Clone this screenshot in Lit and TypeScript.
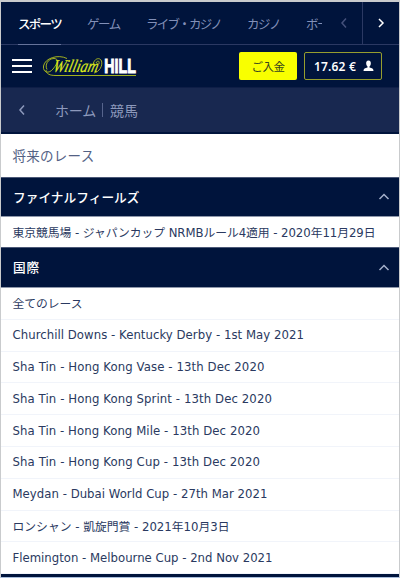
import { LitElement, html, css } from "lit";
import { customElement, property } from "lit/decorators.js";

/** A line of text whose tracking is adjusted so that it spans a given width. */
@customElement("fit-text")
class FitText extends LitElement {
  @property() text = "";
  @property({ type: Number }) span = 0;

  static styles = css`
    :host { display: block; white-space: pre; }
    .t { display: inline-block; }
    .cjk { font-size: var(--cjk-size, 1em); }
  `;

  updated() {
    const el = this.renderRoot.querySelector(".t") as HTMLElement;
    el.style.letterSpacing = "0px";
    const natural = el.getBoundingClientRect().width;
    el.style.letterSpacing = `${(this.span - natural) / this.text.length}px`;
  }

  render() {
    const runs = this.text.split(/([\u3000-\u9fff]+)/).filter((r) => r);
    return html`<span class="t">${runs.map((r) =>
      /[\u3000-\u9fff]/.test(r) ? html`<span class="cjk">${r}</span>` : r)}</span>`;
  }
}

const chevron = (d: string) => html`<svg class="chev" width="14" height="14" viewBox="0 0 14 14"
  fill="none" stroke="currentColor" stroke-width="1.5"><path d=${d}></path></svg>`;
const LEFT = "M9 2.5L5 7L9 11.5";
const RIGHT = "M5 3L9 7L5 11";
const UP = "M2.5 10L7 5.5L11.5 10";

const races: [string, number][] = [
  ["全てのレース", 70],
  ["Churchill Downs - Kentucky Derby - 1st May 2021", 291.5],
  ["Sha Tin - Hong Kong Vase - 13th Dec 2020", 252],
  ["Sha Tin - Hong Kong Sprint - 13th Dec 2020", 259.5],
  ["Sha Tin - Hong Kong Mile - 13th Dec 2020", 247.5],
  ["Sha Tin - Hong Kong Cup - 13th Dec 2020", 247.5],
  ["Meydan - Dubai World Cup - 27th Mar 2021", 255],
  ["ロンシャン - 凱旋門賞 - 2021年10月3日", 217],
  ["Flemington - Melbourne Cup - 2nd Nov 2021", 260],
];

@customElement("app-root")
class AppRoot extends LitElement {
  static styles = css`
    :host {
      display: flex; flex-direction: column; box-sizing: border-box;
      width: 400px; height: 578px; overflow: hidden;
      border: 1px solid #c9cbcd; border-top-width: 2px; border-bottom: 1px solid #a9bddb;
      background: #fff; color: #2a3960;
      font-family: "DejaVu Sans Condensed", "DejaVu Sans", "Noto Sans CJK JP", sans-serif;
      font-stretch: condensed; font-size: 13px;
    }
    * { box-sizing: border-box; }
    svg { display: block; flex: none; }
    .tabs { height: 43px; flex: none; display: flex; background: #00143c; color: #8290b8;
      border-bottom: 1px solid #2b3963; font-size: 12.5px; }
    .list { flex: 1; display: flex; gap: 26px; padding-left: 17px; min-width: 0; }
    .tab { height: 43px; line-height: 46px; flex: none; }
    .active { color: #fff; font-weight: 500; border-bottom: 1px solid #66739b; }
    .clip { width: 16px; overflow: hidden; }
    .prev { width: 37px; display: flex; align-items: center; justify-content: center; color: #44517b; }
    .next { width: 37px; display: flex; align-items: center; justify-content: center;
      border-left: 1px solid #2b3963; color: #fff; }
    .head { height: 42px; flex: none; display: flex; align-items: center; background: #00143c; padding: 0 17px 0 11px; }
    .logo { margin-left: 10px; margin-top: 1px; overflow: visible; }
    .script { font-family: "Liberation Serif", serif; font-style: italic; font-size: 18px; }
    .hill { font-family: "Liberation Sans", sans-serif; font-weight: 700; font-size: 20px; }
    .pay { margin-left: auto; width: 58px; height: 28px; border-radius: 2px; background: #f9ff00;
      display: flex; align-items: center; justify-content: center; color: #35431e; font-size: 11.5px; }
    .acct { margin-left: 7px; width: 78px; height: 28px; border: 1px solid #979e2e; border-radius: 2px;
      display: flex; align-items: center; gap: 7px; padding-left: 9px; color: #fff;
      font-family: "Noto Sans", sans-serif; font-stretch: normal; font-weight: 600; font-size: 12px; }
    .crumb { height: 47px; flex: none; display: flex; align-items: center; background: #182850;
      border-top: 1px solid #0e1e47; border-bottom: 2px solid #00143c; color: #8d99bc; padding-left: 14px; font-size: 14px; }
    .home { margin-left: 26px; }
    .bar { width: 1px; height: 14px; background: #56648c; margin: 0 7px 0 6px; }
    .title { height: 43px; flex: none; display: flex; align-items: center; padding: 0 0 1px 11.5px; color: #536184; font-size: 13.5px; }
    .sect { flex: none; display: flex; align-items: center; justify-content: space-between;
      padding: 0 8px 2px 12px; background: #00143c; color: #fff; font-weight: 500; font-size: 12.7px;
      border-top: 1px solid #4b5877; border-bottom: 1px solid #8f98ab; }
    .s1 { height: 40px; }
    .s2 { height: 41px; }
    .chev { color: #a3afca; }
    .prev .chev, .next .chev, .crumb .chev { color: inherit; }
    .row { flex: none; height: 31.8px; display: flex; align-items: center; padding: 0 0 1px 11.5px;
      border-bottom: 1px solid #f1f4fa; --cjk-size: 11.8px; }
    .one { height: 30px; border: 0; }
    .foot { flex: 1; background: #00143c; }
  `;

  row(text: string, span: number, cls = "") {
    return html`<div class="row ${cls}"><fit-text text=${text} span=${span}></fit-text></div>`;
  }

  render() {
    return html`
      <nav class="tabs">
        <div class="list">
          <div class="tab active"><fit-text text="スポーツ" span="43"></fit-text></div>
          <div class="tab"><fit-text text="ゲーム" span="33"></fit-text></div>
          <div class="tab"><fit-text text="ライブ・カジノ" span="75"></fit-text></div>
          <div class="tab"><fit-text text="カジノ" span="33"></fit-text></div>
          <div class="tab clip"><fit-text text="ボー" span="22"></fit-text></div>
        </div>
        <div class="prev">${chevron(LEFT)}</div>
        <div class="next">${chevron(RIGHT)}</div>
      </nav>
      <header class="head">
        <svg width="20" height="16" viewBox="0 0 20 16" fill="#fff">
          <rect y="1" width="20" height="2"></rect><rect y="7" width="20" height="2"></rect><rect y="13" width="20" height="2"></rect>
        </svg>
        <svg class="logo" width="96" height="24" viewBox="0 0 96 24" fill="none">
          <g stroke="#b4c31c" stroke-width=".9">
            <path d="M25 3.5C16 -1 3 3 1.5 11C.8 18 7 19 11 14C15 9 18 4 12 3.5C6 3.5 2.5 10 5 14.5"></path>
            <path d="M4 15C4 19 8 20.5 14 20.5H94"></path>
            <path d="M51 10C52 3 58 2 59.5 6C61 11 57 17 52 18M54 8C56 4.5 57.5 6 57 9"></path>
          </g>
          <text class="script" x="9" y="17.3" textLength="45" lengthAdjust="spacingAndGlyphs" transform="translate(5.6 0) skewX(-14)" fill="#dce71b" stroke="#dce71b" stroke-width=".2">William</text>
          <text class="hill" x="62.3" y="17.6" textLength="31.5" lengthAdjust="spacingAndGlyphs" fill="#fff" stroke="#fff" stroke-width="1.1">HILL</text>
        </svg>
        <div class="pay"><fit-text text="ご入金" span="33"></fit-text></div>
        <div class="acct"><fit-text text="17.62 €" span="42"></fit-text>
          <svg width="11" height="12" viewBox="0 0 11 12" fill="#fff"><path d="M5.5 0.5C7.4.5 8 2 7.8 3.8C7.7 5.2 7 6 6.5 6.5V7.5C9 8 10.5 8.6 10.5 11H.5C.5 8.6 2 8 4.5 7.5V6.5C4 6 3.3 5.2 3.2 3.8C3 2 3.6.5 5.5.5Z"></path></svg>
        </div>
      </header>
      <div class="crumb">${chevron(LEFT)}
        <fit-text class="home" text="ホーム" span="41"></fit-text><span class="bar"></span>
        <fit-text text="競馬" span="28"></fit-text></div>
      <div class="title"><fit-text text="将来のレース" span="82"></fit-text></div>
      <div class="sect s1"><fit-text text="ファイナルフィールズ" span="126.5"></fit-text>${chevron(UP)}</div>
      ${this.row("東京競馬場 - ジャパンカップ NRMBルール4適用 - 2020年11月29日", 363, "one")}
      <div class="sect s2"><fit-text text="国際" span="27"></fit-text>${chevron(UP)}</div>
      ${races.map(([t, w]) => this.row(t, w))}
      <div class="foot"></div>`;
  }
}
